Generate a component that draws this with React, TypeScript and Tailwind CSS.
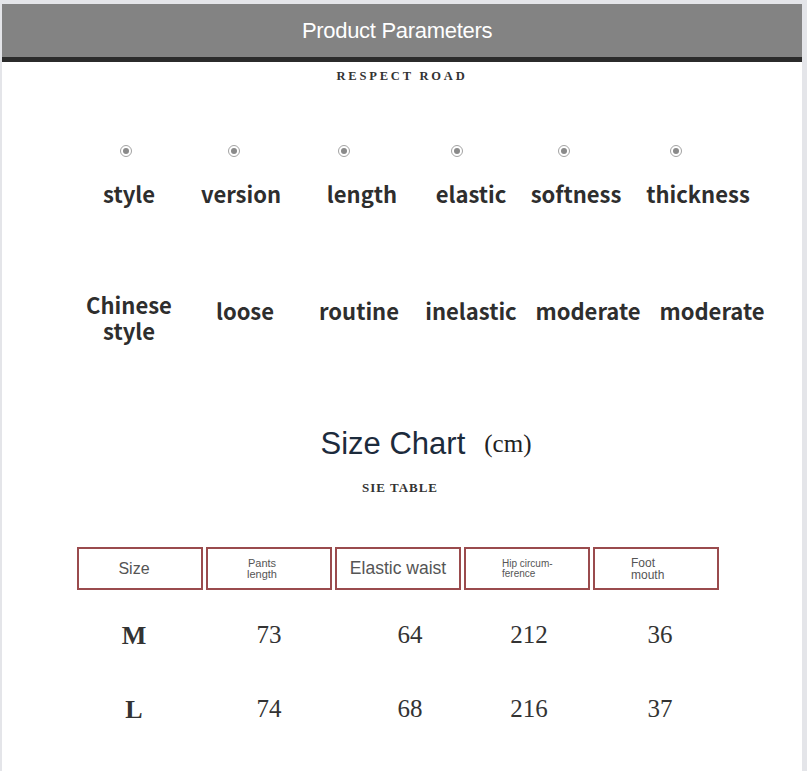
const params = [
  { name: "style", value: "Chinese style" },
  { name: "version", value: "loose" },
  { name: "length", value: "routine" },
  { name: "elastic", value: "inelastic" },
  { name: "softness", value: "moderate" },
  { name: "thickness", value: "moderate" },
];

const sizes = [
  { size: "M", pants: "73", waist: "64", hip: "212", foot: "36" },
  { size: "L", pants: "74", waist: "68", hip: "216", foot: "37" },
];

function Radio() {
  return (
    <div className="flex justify-center">
      <span className="w-[12px] h-[12px] rounded-full border-[1.5px] border-[#a3a3a3] flex items-center justify-center">
        <span className="w-[6px] h-[6px] rounded-full bg-[#8a8a8a]" />
      </span>
    </div>
  );
}

function HeadCell({ children, className }: { children: React.ReactNode; className?: string }) {
  return (
    <div
      className={`h-[43px] border-2 border-[#9a4b4d] flex items-center text-[#555] font-['Liberation_Sans',Arial,sans-serif] ${className ?? ""}`}
    >
      {children}
    </div>
  );
}

export default function App() {
  const sans = "font-['Noto_Sans_CJK_SC','Noto_Sans',sans-serif]";
  const serif = "font-['Liberation_Serif','Times_New_Roman',serif]";

  return (
    <div className="w-[807px] h-[771px] bg-[#e4e5e9] pt-[4px] pl-[2px]">
      <div className="w-[800px] h-[767px] bg-white">
        <div className="h-[53px] bg-[#838383] flex items-center justify-center">
          <span className="text-white text-[22px] font-['Liberation_Sans',Arial,sans-serif] tracking-[-0.3px] pr-[10px]">
            Product Parameters
          </span>
        </div>
        <div className="h-[5px] bg-[#2b2b2b]" />

        <div className={`pt-[7px] h-[28px] text-center text-[12.5px] leading-[14px] font-bold tracking-[2.8px] text-[#333] ${serif}`}>
          RESPECT ROAD
        </div>

        {/* parameter names */}
        <div className="mt-[55px] ml-[70px] grid grid-cols-[108px_108px_112px_114px_100px_124px]">
          {params.map((p) => (
            <Radio key={p.name} />
          ))}
        </div>
        <div className={`mt-[22px] ml-[71px] grid grid-cols-[112px_112px_130px_88px_122px_122px] text-[22px] leading-[28px] font-bold text-[#2e2e2e] ${sans}`}>
          {params.map((p) => (
            <div key={p.name} className="text-center whitespace-nowrap">
              {p.name}
            </div>
          ))}
        </div>

        {/* parameter values */}
        <div className={`mt-[90px] ml-[70px] grid grid-cols-[114px_118px_110px_114px_120px_128px] items-start text-[22px] leading-[26px] font-bold text-[#2e2e2e] ${sans}`}>
          {params.map((p, i) => (
            <div key={p.name} className={`text-center ${i === 0 ? "-mt-[6px]" : "whitespace-nowrap"}`}>
              {i === 0 ? (
                <>
                  Chinese
                  <br />
                  style
                </>
              ) : (
                p.value
              )}
            </div>
          ))}
        </div>

        {/* size chart */}
        <div className="mt-[83px] h-[36px] flex items-center justify-center gap-[19px] pl-[48px]">
          <span className="text-[31px] text-[#1c2b3c] font-['Liberation_Sans',Arial,sans-serif]">Size Chart</span>
          <span className={`text-[25px] text-[#222] ${serif}`}>(cm)</span>
        </div>
        <div className={`mt-[18px] text-center text-[13px] leading-[16px] font-bold tracking-[1px] text-[#333] pr-[4px] ${serif}`}>
          SIE TABLE
        </div>

        <div className="mt-[51px] ml-[75px] grid grid-cols-[repeat(5,126px)] gap-x-[3px]">
          <HeadCell className="justify-center pr-[12px] text-[16px]">Size</HeadCell>
          <HeadCell className="pl-[39px] text-[11px] leading-[11px]">
            <span className="text-center">
              Pants
              <br />
              length
            </span>
          </HeadCell>
          <HeadCell className="justify-center text-[17.5px]">Elastic waist</HeadCell>
          <HeadCell className="pl-[36px] text-[10px] leading-[10px]">
            <span>
              Hip circum-
              <br />
              ference
            </span>
          </HeadCell>
          <HeadCell className="pl-[36px] text-[12px] leading-[12px]">
            <span>
              Foot
              <br />
              mouth
            </span>
          </HeadCell>
        </div>

        <div className={`mt-[8px] ml-[75px] text-[#333] ${serif}`}>
          {sizes.map((s) => (
            <div key={s.size} className="h-[74px] grid grid-cols-[repeat(5,126px)] gap-x-[3px] items-center text-[25px]">
              <div className="text-center pr-[12px] font-bold text-[26px]">{s.size}</div>
              <div className="text-center">{s.pants}</div>
              <div className="text-center pl-[24px]">{s.waist}</div>
              <div className="text-center pl-[4px]">{s.hip}</div>
              <div className="text-center pl-[8px]">{s.foot}</div>
            </div>
          ))}
        </div>
      </div>
    </div>
  );
}
